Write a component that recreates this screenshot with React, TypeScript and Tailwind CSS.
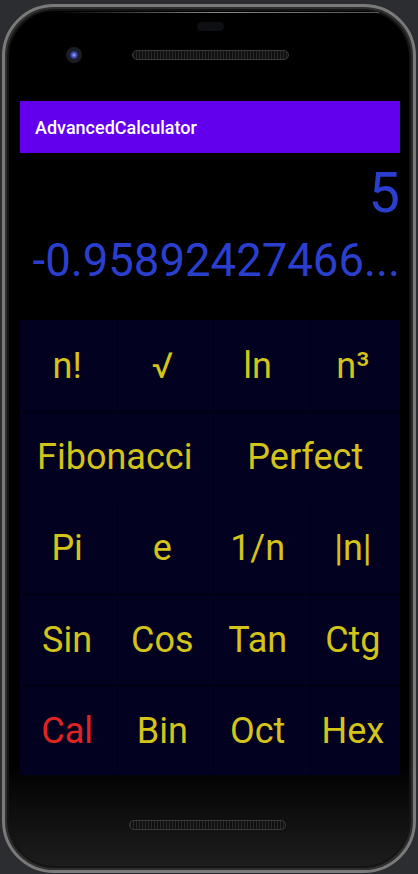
import React from "react";

const rows: { label: string; red?: boolean }[][] = [
  [{ label: "n!" }, { label: "√" }, { label: "ln" }, { label: "n³" }],
  [{ label: "Fibonacci" }, { label: "Perfect" }],
  [{ label: "Pi" }, { label: "e" }, { label: "1/n" }, { label: "|n|" }],
  [{ label: "Sin" }, { label: "Cos" }, { label: "Tan" }, { label: "Ctg" }],
  [{ label: "Cal", red: true }, { label: "Bin" }, { label: "Oct" }, { label: "Hex" }],
];

// row heights, and rows that get a dark line above them
const heights = ["h-[91px]", "h-[91px]", "h-[92px]", "h-[91px]", "h-[90px]"];
const lined = [1, 3, 4];

function Grille({ className }: { className: string }) {
  return (
    <div
      className={`h-[10px] w-[157px] rounded-full border border-[#3a3a3a] bg-[repeating-linear-gradient(90deg,#2a2a2a_0px,#2a2a2a_1px,#101010_1px,#101010_3px)] ${className}`}
    />
  );
}

export default function App() {
  return (
    <div
      className="w-[418px] h-[874px] overflow-hidden bg-[#2c2d30] pt-[4px] px-[2px]"
      style={{ fontFamily: "Roboto, 'Noto Sans', sans-serif" }}
    >
      <div className="relative h-[869px] rounded-[52px] border-[3px] border-[#7a7a7a] bg-[#2e2e2e] p-[2px]">
        <div className="relative flex h-full flex-col rounded-[48px] border-[2px] border-[#141414] bg-[linear-gradient(180deg,#000_0%,#000_88%,#1d1d1d_100%)] pl-[11px] pr-[9px]">
          {/* glass reflection */}
          <div className="absolute left-[46px] right-[30px] top-[1px] h-px bg-gradient-to-r from-transparent via-[#8a8a8a] to-[#555]" />

          {/* top bezel */}
          <div className="flex h-[90px] flex-col">
            <div className="mx-auto mt-[11px] h-[9px] w-[27px] rounded-full bg-[#0e0f13]" />
            <div className="mt-[16px] flex items-center">
              <div className="ml-[46px] flex h-[16px] w-[16px] items-center justify-center rounded-full bg-[#1b1d24]">
                <div className="h-[8px] w-[8px] rounded-full bg-[radial-gradient(circle,#9aa6ff_0%,#3c49b8_45%,#0b0d20_100%)]" />
              </div>
              <Grille className="ml-[50px]" />
            </div>
          </div>

          {/* screen */}
          <div className="flex h-[52px] items-center bg-[#6200ee] px-[15px] text-[18px] font-medium text-white">
            AdvancedCalculator
          </div>
          <div className="mt-[12px] text-right text-[56px] leading-none text-[#2b3fcf]">5</div>
          <div className="mt-[17px] whitespace-nowrap text-right text-[45.5px] leading-none text-[#2b3fcf]">
            -0.95892427466...
          </div>

          <div className="mt-[36.5px] flex flex-col bg-[#020220]">
            {rows.map((row, i) => (
              <div
                key={i}
                className={`flex ${heights[i]} ${lined.includes(i) ? "border-t border-[#00000c]" : ""}`}
              >
                {row.map((cell, j) => (
                  <div
                    key={j}
                    className={`flex flex-1 items-center justify-center text-[36px] ${
                      cell.red ? "text-[#e02424]" : "text-[#d4c41a]"
                    } ${j > 0 ? "border-l border-[#040424]" : ""}`}
                  >
                    {cell.label}
                  </div>
                ))}
              </div>
            ))}
          </div>

          <Grille className="mx-auto mt-[45px] -translate-x-[3px]" />
        </div>
      </div>
    </div>
  );
}
